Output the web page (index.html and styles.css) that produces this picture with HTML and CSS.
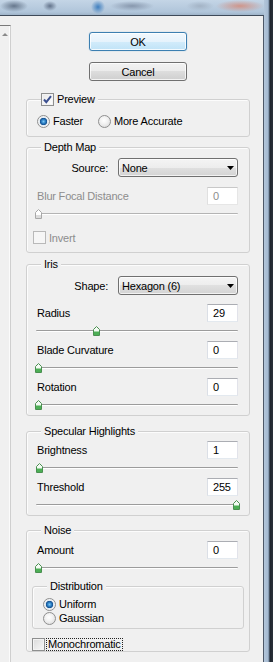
FILE: index.html
```html
<!DOCTYPE html>
<html>
<head>
<meta charset="utf-8">
<title>Iris Blur</title>
<link rel="stylesheet" href="styles.css">
</head>
<body>
<div class="screen">
  <div class="main">
    <div class="topbar"></div>
    <div class="window">
      <div class="leftpane"><div class="scrollbox"><span class="scroll-up"></span></div></div>
      <div class="dialog">
        <button class="btn btn-default">OK</button>
        <button class="btn btn-cancel">Cancel</button>

        <fieldset class="group group-preview">
          <legend><span class="legend-check"><span class="check"><svg width="11" height="11" viewBox="0 0 11 11"><path d="M2 5.5 L4.3 8.2 L9 2.2" fill="none" stroke="#3b4f8f" stroke-width="2"/></svg></span>Preview</span></legend>
          <div class="radio-row">
            <span class="opt"><span class="radio on"></span>Faster</span>
            <span class="opt"><span class="radio"></span>More Accurate</span>
          </div>
        </fieldset>

        <fieldset class="group group-depth">
          <legend>Depth Map</legend>
          <div class="row-right"><span>Source:</span><div class="select"><span>None</span><svg width="7" height="4" viewBox="0 0 7 4"><path d="M0 0 H7 L3.5 4 Z" fill="#000"/></svg></div></div>
          <div class="param disabled blur-param">
            <div class="param-row"><span>Blur Focal Distance</span><span class="num">0</span></div>
            <div class="slider"><div class="track"></div><svg class="thumb" style="left:-2px" width="7" height="10" viewBox="0 0 7 10"><path d="M0.5 3.5 L3.5 0.5 L6.5 3.5 V9.5 H0.5 Z" fill="#fff" stroke="#a8a8a8"/><rect x="1" y="6" width="5" height="3" fill="#dcdcdc"/></svg></div>
          </div>
          <div class="check-line disabled invert"><span class="check"></span>Invert</div>
        </fieldset>

        <fieldset class="group group-iris">
          <legend>Iris</legend>
          <div class="row-right"><span>Shape:</span><div class="select"><span>Hexagon (6)</span><svg width="7" height="4" viewBox="0 0 7 4"><path d="M0 0 H7 L3.5 4 Z" fill="#000"/></svg></div></div>
          <div class="param first-param">
            <div class="param-row"><span>Radius</span><span class="num">29</span></div>
            <div class="slider"><div class="track"></div><svg class="thumb" style="left:56px" width="7" height="10" viewBox="0 0 7 10"><path d="M0.5 3.5 L3.5 0.5 L6.5 3.5 V9.5 H0.5 Z" fill="#f4fbf4" stroke="#4a8f50"/><rect x="1" y="5.5" width="5" height="3.5" fill="#4caf55"/></svg></div>
          </div>
          <div class="param">
            <div class="param-row"><span>Blade Curvature</span><span class="num">0</span></div>
            <div class="slider"><div class="track"></div><svg class="thumb" style="left:-2px" width="7" height="10" viewBox="0 0 7 10"><path d="M0.5 3.5 L3.5 0.5 L6.5 3.5 V9.5 H0.5 Z" fill="#f4fbf4" stroke="#4a8f50"/><rect x="1" y="5.5" width="5" height="3.5" fill="#4caf55"/></svg></div>
          </div>
          <div class="param">
            <div class="param-row"><span>Rotation</span><span class="num">0</span></div>
            <div class="slider"><div class="track"></div><svg class="thumb" style="left:-2px" width="7" height="10" viewBox="0 0 7 10"><path d="M0.5 3.5 L3.5 0.5 L6.5 3.5 V9.5 H0.5 Z" fill="#f4fbf4" stroke="#4a8f50"/><rect x="1" y="5.5" width="5" height="3.5" fill="#4caf55"/></svg></div>
          </div>
        </fieldset>

        <fieldset class="group group-spec">
          <legend>Specular Highlights</legend>
          <div class="param first-param">
            <div class="param-row"><span>Brightness</span><span class="num">1</span></div>
            <div class="slider"><div class="track"></div><svg class="thumb" style="left:-1px" width="7" height="10" viewBox="0 0 7 10"><path d="M0.5 3.5 L3.5 0.5 L6.5 3.5 V9.5 H0.5 Z" fill="#f4fbf4" stroke="#4a8f50"/><rect x="1" y="5.5" width="5" height="3.5" fill="#4caf55"/></svg></div>
          </div>
          <div class="param">
            <div class="param-row"><span>Threshold</span><span class="num">255</span></div>
            <div class="slider"><div class="track"></div><svg class="thumb" style="left:196px" width="7" height="10" viewBox="0 0 7 10"><path d="M0.5 3.5 L3.5 0.5 L6.5 3.5 V9.5 H0.5 Z" fill="#f4fbf4" stroke="#4a8f50"/><rect x="1" y="5.5" width="5" height="3.5" fill="#4caf55"/></svg></div>
          </div>
        </fieldset>

        <fieldset class="group group-noise">
          <legend>Noise</legend>
          <div class="param first-param">
            <div class="param-row"><span>Amount</span><span class="num">0</span></div>
            <div class="slider"><div class="track"></div><svg class="thumb" style="left:-2px" width="7" height="10" viewBox="0 0 7 10"><path d="M0.5 3.5 L3.5 0.5 L6.5 3.5 V9.5 H0.5 Z" fill="#f4fbf4" stroke="#4a8f50"/><rect x="1" y="5.5" width="5" height="3.5" fill="#4caf55"/></svg></div>
          </div>
          <fieldset class="group group-dist">
            <legend>Distribution</legend>
            <div class="radio-col">
              <span class="opt"><span class="radio on"></span>Uniform</span>
              <span class="opt"><span class="radio"></span>Gaussian</span>
            </div>
          </fieldset>
          <div class="check-line mono"><span class="check"></span><span class="focus">Monochromatic</span></div>
        </fieldset>
      </div>
    </div>
  </div>
  <div class="frame"></div>
</div>
</body>
</html>
```
FILE: styles.css
```css
html, body {
  margin: 0;
  padding: 0;
}
body {
  background: #f0f0f0;
  font-family: "Liberation Sans", Arial, sans-serif;
  font-size: 11px;
  letter-spacing: -0.2px;
  color: #000;
}
.screen {
  display: flex;
  width: 273px;
  height: 662px;
  overflow: hidden;
}
.main {
  width: 264px;
  display: flex;
  flex-direction: column;
}
.topbar {
  height: 15px;
  flex: none;
  background:
    radial-gradient(ellipse 14px 6px at 14px 6px, #66778c, rgba(102,119,140,0)),
    radial-gradient(ellipse 7px 5px at 50px 6px, #62728a, rgba(98,114,138,0)),
    radial-gradient(circle 7px at 98px 7px, #3f7fbf, rgba(63,127,191,0)),
    radial-gradient(ellipse 22px 5px at 132px 6px, #8797ad, rgba(135,151,173,0)),
    radial-gradient(ellipse 14px 5px at 200px 6px, #a3b3c5, rgba(163,179,197,0)),
    radial-gradient(ellipse 24px 6px at 240px 6px, #cf958a, rgba(207,149,138,0)),
    linear-gradient(#c4d5e6, #b0c5da 80%, #9fb4c9);
}
.window {
  flex: 1;
  display: flex;
  border-top: 1px solid #3e4a59;
  border-right: 1px solid #4d5868;
  background: #f0f0f0;
}
.leftpane {
  width: 11px;
  flex: none;
  padding-top: 9px;
  box-sizing: border-box;
}
.scrollbox {
  height: 100%;
  box-sizing: border-box;
  border-top: 1px solid #7a7a7a;
  border-right: 1px solid #cfcfcf;
  box-shadow: inset -1px 0 0 #fbfbfb;
  padding: 7px 0 0 2px;
}
.scroll-up {
  display: block;
  width: 0;
  height: 0;
  border-left: 3px solid transparent;
  border-right: 3px solid transparent;
  border-bottom: 3px solid #8a8a8a;
}
.dialog {
  flex: 1;
  display: flex;
  flex-direction: column;
  padding: 0 13px 0 15px;
}
.btn {
  align-self: center;
  width: 98px;
  height: 19px;
  margin: 16px 0 0;
  padding: 0;
  font: inherit;
  letter-spacing: inherit;
  color: #000;
  border: 1px solid #707070;
  border-radius: 3px;
  background: linear-gradient(#f2f2f2 0, #ebebeb 50%, #dddddd 50%, #cfcfcf 100%);
  box-shadow: inset 0 0 0 1px rgba(255,255,255,0.75);
}
.btn-default {
  border-color: #3c7fb1;
  background: linear-gradient(#f1f8fd 0, #e6f3fc 50%, #d3ecfb 50%, #c0e3f7 100%);
  box-shadow: inset 0 0 0 1px rgba(255,255,255,0.8), 0 0 1px #6aa9d8;
}
.btn-cancel {
  margin-top: 11px;
}
.group {
  margin: 0;
  padding: 0 11px 0 10px;
  min-width: 0;
  border: 1px solid #d0d0d0;
  border-radius: 3px;
  box-shadow: inset 1px 1px 0 #fcfcfc;
}
legend {
  padding: 0 3px;
  margin-left: 4px;
  height: 13px;
  line-height: 13px;
  background: #f0f0f0;
}
.legend-check {
  display: flex;
  align-items: center;
  gap: 3px;
  margin-left: -3px;
}
.group-preview {
  margin-top: 12px;
  padding-bottom: 8px;
}
.group-depth {
  margin-top: 4px;
  padding-bottom: 8px;
}
.group-iris {
  margin-top: 5px;
}
.group-spec {
  margin-top: 9px;
}
.group-noise {
  margin-top: 8px;
}
.group-dist {
  margin: 2px -6px 0 -5px;
  padding: 0 10px 3px 10px;
}
.radio-row {
  display: flex;
  gap: 15px;
  margin-top: 8px;
  height: 14px;
  align-items: center;
}
.radio-col {
  display: flex;
  flex-direction: column;
  margin-top: 4px;
}
.radio-col .opt {
  height: 14px;
}
.opt {
  display: flex;
  align-items: center;
  gap: 3px;
}
.radio {
  width: 13px;
  height: 13px;
  box-sizing: border-box;
  border-radius: 50%;
  border: 1px solid #8f8f8f;
  background: radial-gradient(circle at 45% 40%, #ffffff 0, #f2f2f2 40%, #d4d4d4 100%);
  flex: none;
}
.radio.on {
  background: radial-gradient(circle at 50% 50%, #7cc6f4 0, #2b7fc4 2px, #154f8e 3.4px, #dfe8f0 4px, #f6f6f6 5.5px);
}
.check {
  width: 13px;
  height: 13px;
  box-sizing: border-box;
  border: 1px solid #8e8f8f;
  background: linear-gradient(135deg, #dadada, #f8f8f8);
  box-shadow: inset 0 0 0 1px #f3f3f3;
  display: flex;
  align-items: center;
  justify-content: center;
  flex: none;
}
.legend-check .check {
  background: linear-gradient(135deg, #e8e8e8, #ffffff);
}
.row-right {
  display: flex;
  justify-content: flex-end;
  align-items: center;
  gap: 10px;
  height: 19px;
}
.group-depth .row-right {
  margin-top: 4px;
}
.group-iris .row-right {
  margin-top: 5px;
}
.select {
  width: 120px;
  height: 19px;
  box-sizing: border-box;
  border: 1px solid #707070;
  border-radius: 3px;
  background: linear-gradient(#f4f4f4 0, #ededed 50%, #e0e0e0 50%, #d3d3d3 100%);
  box-shadow: inset 0 0 0 1px rgba(255,255,255,0.7);
  display: flex;
  align-items: center;
  justify-content: space-between;
  padding: 0 3px 0 3px;
  color: #000;
}
.param-row {
  display: flex;
  justify-content: space-between;
  align-items: center;
  height: 18px;
}
.num {
  width: 31px;
  height: 18px;
  box-sizing: border-box;
  background: #fff;
  border: 1px solid;
  border-color: #abadb3 #e2e3ea #e3e9ef #dbdfe6;
  padding-left: 5px;
  line-height: 16px;
  color: #000;
}
.slider {
  position: relative;
  height: 19px;
  padding-top: 8px;
  box-sizing: border-box;
}
.track {
  height: 1px;
  margin-left: -1px;
  background: #9c9c9c;
  border-bottom: 1px solid #ffffff;
  border-radius: 1px;
}
.thumb {
  position: absolute;
  top: 4px;
  display: block;
}
.first-param {
  margin-top: 9px;
}
.group-spec .first-param {
  margin-top: 3px;
}
.group-noise .first-param {
  margin-top: 4px;
}
.blur-param {
  margin-top: 10px;
}
.disabled {
  color: #8d8d8d;
}
.disabled .num {
  color: #8d8d8d;
  border-color: #c8c8c8 #e6e6e6 #e6e6e6 #e0e0e0;
}
.disabled .track {
  background: #b4b4b4;
}
.check-line {
  display: flex;
  align-items: center;
  gap: 3px;
  height: 13px;
}
.invert {
  margin: 7px 0 0 -4px;
}
.invert .check {
  border-color: #b9b9b9;
  background: #f6f6f6;
  box-shadow: none;
}
.mono {
  margin: 9px 0 0 -5px;
  gap: 1px;
}
.focus {
  border: 1px dotted #222;
  height: 13px;
  box-sizing: border-box;
  line-height: 11px;
  padding: 0 1px;
  color: #000;
}
.frame {
  width: 9px;
  flex: none;
  background: linear-gradient(to right, #b3c6da 0, #a5bad1 4px, #6c7f95 5px, #1f252d 6px, #2b323b 9px);
}
```
